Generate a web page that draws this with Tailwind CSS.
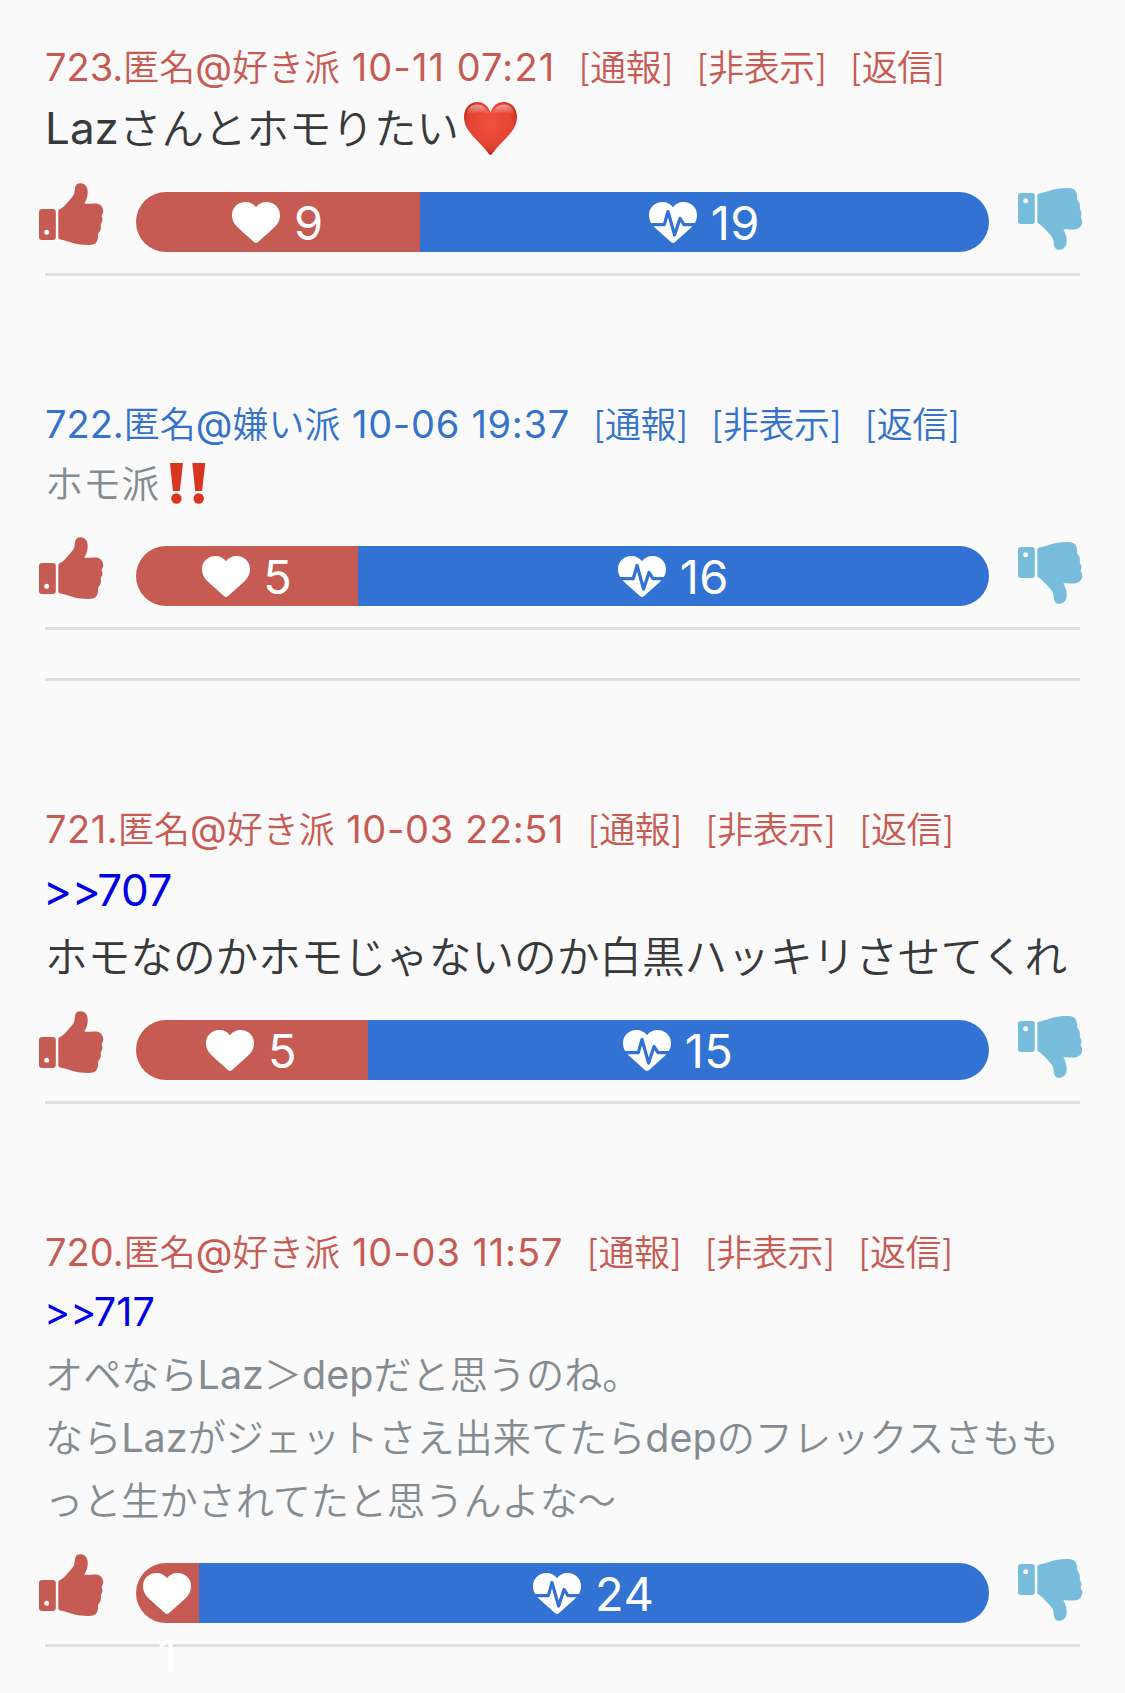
<!DOCTYPE html>
<html lang="ja">
<head>
<meta charset="utf-8">
<title>コメント</title>
<script src="https://cdn.jsdelivr.net/npm/@tailwindcss/browser@4"></script>
</head>
<body class="h-[1693px] bg-[#fafafa] font-['Inter','Noto_Sans_CJK_JP',sans-serif] font-normal">
<svg class="absolute size-0">
  <defs>
    <symbol id="thumb" viewBox="0 0 65 62">
      <path fill-rule="evenodd" d="M3 26H13.8Q16.8 26 16.8 29V54Q16.8 57 13.8 57H3Q0 57 0 54V29Q0 26 3 26ZM7.7 46.8A2.5 2.5 0 1 0 7.7 51.8A2.5 2.5 0 1 0 7.7 46.8Z"/>
      <path d="M19.3 28Q19.5 26.6 22 25.6C24.5 24 27 21 29.3 18.5C32 15.5 34.5 13 35.2 10.5C36 7.5 35.5 5 36.8 2.6C38 .2 40.5-.3 43.500 .6C46.500 1.500 48.500 4 48.700 8C49 13 47.500 17 45.300 20.500C49 21.300 53 20.200 57 20.600C62 21 64.600 25 64.200 29C64 31 62.600 32 62.600 33.500C63.600 35 63.700 37 63.100 38.500C62.600 39.800 61.800 40.500 61.700 42C62.200 44 61.900 46 61.200 47.500C60.500 49 59.200 50 59 51.500C59.200 54 59 56.500 57.500 59C56 61.300 53.500 62 50 62C42 62 36 61 30 58.800C26.500 57.500 23 57 20.500 56.300Q19.300 55.800 19.300 54Z"/>
    </symbol>
    <symbol id="heart" viewBox="0 0 48 41">
      <path d="M24 5.300C26.300 2 30 0 34.500 0C42.200 0 48 5.600 48 13C48 18.300 45.800 22 42 25.700L25.800 40.200Q24 41.800 22.200 40.200L6 25.700C2.200 22 0 18.300 0 13C0 5.600 5.800 0 13.500 0C18 0 21.700 2 24 5.300Z"/>
    </symbol>
    <symbol id="pulse" viewBox="0 0 48 41">
      <use href="#heart" width="48" height="41"/>
      <path d="M-1 22.600H15.300L19 9.500L25.600 33L31 16.500L35 22.600H49" fill="none" stroke="#3272d2" stroke-width="3.200" stroke-linejoin="round"/>
    </symbol>
    <radialGradient id="love" cx=".5" cy=".42" r=".62">
      <stop offset="0" stop-color="#f0503f"/><stop offset=".65" stop-color="#e54434"/><stop offset=".88" stop-color="#c42f22"/><stop offset="1" stop-color="#8e160e"/>
    </radialGradient>
    <linearGradient id="shine" x1="0" y1="0" x2="0" y2="1">
      <stop offset="0" stop-color="#fff" stop-opacity=".5"/><stop offset="1" stop-color="#fff" stop-opacity="0"/>
    </linearGradient>
  </defs>
</svg>
<main class="px-[45px]">

  <article class="pt-10">
    <header class="flex h-[54px] items-baseline whitespace-nowrap text-[38px] leading-[54px] text-[#c75b53]">
      <span>723.<span class="text-[36px] font-[350] leading-none">匿名</span>@<span class="text-[36px] font-[350] leading-none">好き派</span><span class="tracking-[1.08px]"> 10-11 07:21</span></span>
      <span class="ml-[23px] flex gap-[23px] text-[36px] font-[350] tracking-[-0.5px]"><a>[通報]</a><a>[非表示]</a><a>[返信]</a></span>
    </header>
    <p class="flex h-[68px] items-center whitespace-nowrap text-[44px] leading-[68px] text-[#37393a]"><span>Laz<span class="text-[42.500px] font-[350] leading-none">さんとホモりたい</span></span>
      <svg class="ml-[5px] size-[53px]" viewBox="0 0 53 53"><path d="M26.500 11C28.500 4 33 0 39.500 0C47.500 0 53 6.500 53 15C53 30 38 38 28 52Q26.500 54 25 52C15 38 0 30 0 15C0 6.500 5.500 0 13.500 0C20 0 24.500 4 26.500 11Z" fill="url(#love)"/><path d="M3 13C3 6 7.500 2.500 13 2.500C19 2.500 23 6 24.500 12Q14 8 3 13ZM50 13C50 6 45.500 2.500 40 2.500C34 2.500 30 6 28.500 12Q39 8 50 13Z" fill="url(#shine)"/></svg>
    </p>
    <div class="relative z-10 mt-[21px] -ml-1.5 -mr-[3px] flex h-[69px] items-start">
      <svg class="h-[62px] w-[65px] -mr-px shrink-0 fill-[#c65b54]"><use href="#thumb"/></svg>
      <div class="mt-[9px] ml-[33px] flex h-[60px] w-[853px] shrink-0 text-center text-[47px] leading-[62px] tracking-[0.4px] text-white">
        <div class="shrink-0 rounded-l-full bg-[#c65b54]" style="width:33.3%"><svg class="inline h-[41px] w-12 fill-white align-[-3px]"><use href="#heart"/></svg> 9</div>
        <div class="grow rounded-r-full bg-[#3272d2]"><svg class="inline h-[41px] w-12 fill-white align-[-3px]"><use href="#pulse"/></svg> 19</div>
      </div>
      <svg class="mt-[5px] ml-[29px] h-[62px] w-[65px] shrink-0 -scale-y-100 fill-[#77bcda]"><use href="#thumb"/></svg>
    </div>
    <hr class="mt-[21px] h-[3px] border-0 bg-[#dfdfdf]">
  </article>

  <article class="pt-[121px]">
    <header class="flex h-[55px] items-baseline whitespace-nowrap text-[38px] leading-[55px] text-[#3472cb]">
      <span>722.<span class="text-[36px] font-[350] leading-none">匿名</span>@<span class="text-[36px] font-[350] leading-none">嫌い派</span><span class="tracking-[0.72px]"> 10-06 19:37</span></span>
      <span class="ml-[23px] flex gap-[23px] text-[36px] font-[350] tracking-[-0.5px]"><a>[通報]</a><a>[非表示]</a><a>[返信]</a></span>
    </header>
    <p class="flex h-[65px] items-center whitespace-nowrap text-[38.100px] leading-[65px] text-[#858c91]"><span class="font-[350]">ホモ派</span>
      <svg class="mb-0.5 ml-[11px] h-[41px] w-9 fill-[#d93620]" viewBox="0 0 36 41"><path d="M0 0H13L9.800 28H2.900ZM22.300 0H35.300L32.100 28H25.200Z"/><circle cx="6.400" cy="35.500" r="5.200"/><circle cx="28.700" cy="35.500" r="5.200"/></svg>
    </p>
    <div class="relative z-10 mt-5 -ml-1.5 -mr-[3px] flex h-[69px] items-start">
      <svg class="h-[62px] w-[65px] -mr-px shrink-0 fill-[#c65b54]"><use href="#thumb"/></svg>
      <div class="mt-[9px] ml-[33px] flex h-[60px] w-[853px] shrink-0 text-center text-[47px] leading-[62px] tracking-[0.4px] text-white">
        <div class="shrink-0 rounded-l-full bg-[#c65b54]" style="width:26%"><svg class="inline h-[41px] w-12 fill-white align-[-3px]"><use href="#heart"/></svg> 5</div>
        <div class="grow rounded-r-full bg-[#3272d2]"><svg class="inline h-[41px] w-12 fill-white align-[-3px]"><use href="#pulse"/></svg> 16</div>
      </div>
      <svg class="mt-[5px] ml-[29px] h-[62px] w-[65px] shrink-0 -scale-y-100 fill-[#77bcda]"><use href="#thumb"/></svg>
    </div>
    <hr class="mt-[21px] h-[3px] border-0 bg-[#dfdfdf]">
    <hr class="mt-12 h-[3px] border-0 bg-[#dfdfdf]">
  </article>

  <article class="pt-[121px]">
    <header class="flex h-[54px] items-baseline whitespace-nowrap text-[38px] leading-[54px] text-[#c75b53]">
      <span><span class="tracking-[0.5px]">721.</span><span class="text-[36px] font-[350] leading-none">匿名</span>@<span class="text-[36px] font-[350] leading-none">好き派</span><span class="tracking-[0.65px]"> 10-03 22:51</span></span>
      <span class="ml-[23px] flex gap-[23px] text-[36px] font-[350] tracking-[-0.5px]"><a>[通報]</a><a>[非表示]</a><a>[返信]</a></span>
    </header>
    <p class="-ml-0.5 h-[68px] text-[44px] leading-[68px] tracking-[-0.400px] text-[#0000e6] [font-feature-settings:'calt'_0]"><a>&gt;&gt;707</a></p>
    <p class="h-[66px] whitespace-nowrap text-[42.650px] font-[350] leading-[67px] text-[#37393a]">ホモなのかホモじゃないのか白黒ハッキリさせてくれ</p>
    <div class="relative z-10 mt-[21px] -ml-1.5 -mr-[3px] flex h-[69px] items-start">
      <svg class="h-[62px] w-[65px] -mr-px shrink-0 fill-[#c65b54]"><use href="#thumb"/></svg>
      <div class="mt-[9px] ml-[33px] flex h-[60px] w-[853px] shrink-0 text-center text-[47px] leading-[62px] tracking-[0.4px] text-white">
        <div class="shrink-0 rounded-l-full bg-[#c65b54]" style="width:27.15%"><svg class="inline h-[41px] w-12 fill-white align-[-3px]"><use href="#heart"/></svg> 5</div>
        <div class="grow rounded-r-full bg-[#3272d2]"><svg class="inline h-[41px] w-12 fill-white align-[-3px]"><use href="#pulse"/></svg> 15</div>
      </div>
      <svg class="mt-[5px] ml-[29px] h-[62px] w-[65px] shrink-0 -scale-y-100 fill-[#77bcda]"><use href="#thumb"/></svg>
    </div>
    <hr class="mt-[21px] h-[3px] border-0 bg-[#dfdfdf]">
  </article>

  <article class="pt-[121px]">
    <header class="flex h-[54px] items-baseline whitespace-nowrap text-[38px] leading-[54px] text-[#c75b53]">
      <span>720.<span class="text-[36px] font-[350] leading-none">匿名</span>@<span class="text-[36px] font-[350] leading-none">好き派</span><span class="tracking-[0.9px]"> 10-03 11:57</span></span>
      <span class="ml-[23px] flex gap-[23px] text-[36px] font-[350] tracking-[-0.5px]"><a>[通報]</a><a>[非表示]</a><a>[返信]</a></span>
    </header>
    <p class="-ml-px h-[65px] text-[39.500px] leading-[66px] tracking-[0.2px] text-[#0000e6] [font-feature-settings:'calt'_0]"><a>&gt;&gt;717</a></p>
    <p class="h-[189px] whitespace-nowrap text-[38.150px] font-[350] leading-[63px] text-[#858c91]">オペなら<span class="text-[39.500px] font-normal leading-none">Laz</span>＞<span class="text-[39.500px] font-normal leading-none">dep</span>だと思うのね。<br>なら<span class="text-[39.500px] font-normal leading-none">Laz</span>がジェットさえ出来てたら<span class="text-[39.500px] font-normal leading-none">dep</span>のフレックスさもも<br>っと生かされてたと思うんよな〜</p>
    <div class="relative z-10 mt-[21px] -ml-1.5 -mr-[3px] flex h-[69px] items-start">
      <svg class="h-[62px] w-[65px] -mr-px shrink-0 fill-[#c65b54]"><use href="#thumb"/></svg>
      <div class="mt-[9px] ml-[33px] flex h-[60px] w-[853px] shrink-0 text-center text-[47px] leading-[62px] tracking-[0.4px] text-white">
        <div class="shrink-0 rounded-l-full bg-[#c65b54]" style="width:7.35%"><svg class="inline h-[41px] w-12 fill-white align-[-3px]"><use href="#heart"/></svg> 1</div>
        <div class="grow rounded-r-full bg-[#3272d2]"><svg class="inline h-[41px] w-12 fill-white align-[-3px]"><use href="#pulse"/></svg> 24</div>
      </div>
      <svg class="mt-[5px] ml-[29px] h-[62px] w-[65px] shrink-0 -scale-y-100 fill-[#77bcda]"><use href="#thumb"/></svg>
    </div>
    <hr class="mt-[21px] h-[3px] border-0 bg-[#dfdfdf]">
  </article>
</main>
</body>
</html>
